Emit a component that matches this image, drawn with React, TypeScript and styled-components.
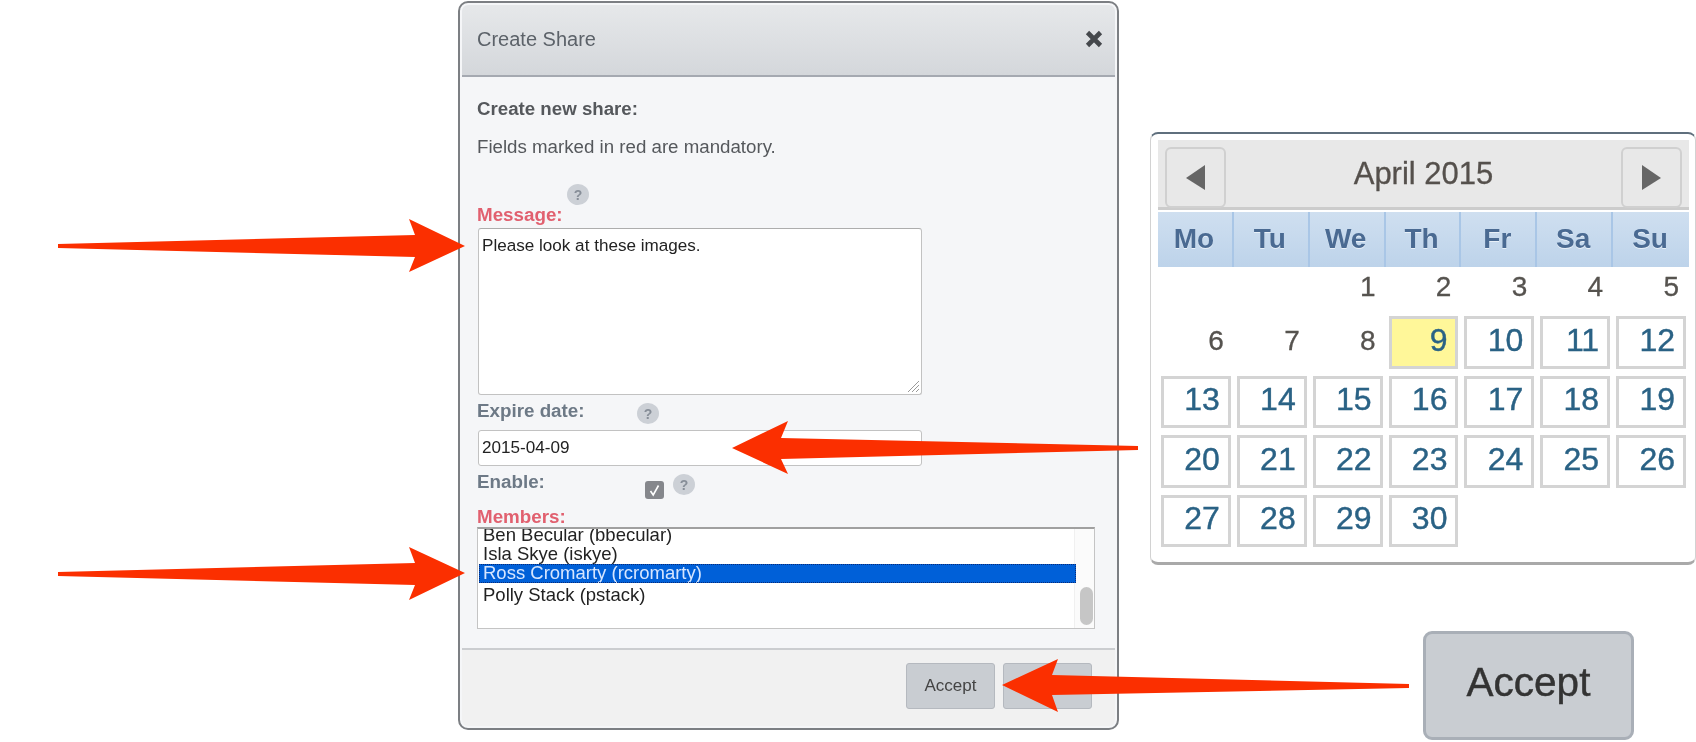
import React from 'react';
import styled, { createGlobalStyle, css } from 'styled-components';

const GlobalStyle = createGlobalStyle`
  html, body {
    margin: 0;
    padding: 0;
    width: 1696px;
    height: 742px;
    overflow: hidden;
    background: #fff;
    font-family: "Liberation Sans", Arial, sans-serif;
  }
`;

const soft = css`
  filter: blur(0.4px);
`;

const Canvas = styled.div`
  position: relative;
  display: flex;
  align-items: flex-start;
  gap: 31px;
  width: 1696px;
  height: 742px;
  padding: 1px 0 0 458px;
  box-sizing: border-box;
  overflow: hidden;
`;

const Arrows = styled.svg`
  position: absolute;
  top: 0;
  left: 0;
  pointer-events: none;
`;

/* dialog */

const Dialog = styled.section`
  ${soft}
  display: flex;
  flex-direction: column;
  flex: none;
  width: 661px;
  height: 729px;
  padding: 2px;
  box-sizing: border-box;
  background: #f5f6f8;
  border: 2px solid #7c7f83;
  border-radius: 10px;
`;

const DialogHeader = styled.header`
  display: flex;
  align-items: center;
  justify-content: space-between;
  flex: none;
  height: 72px;
  padding: 0 12px 2px 15px;
  box-sizing: border-box;
  background: linear-gradient(#e6e8ea, #d4d7db);
  border-bottom: 2px solid #a5a9b1;
  border-radius: 6px 6px 0 0;
`;

const DialogTitle = styled.h1`
  margin: 0;
  font-size: 20px;
  font-weight: 400;
  color: #5c6269;
`;

const CloseIcon = styled.svg`
  display: block;
`;

const DialogBody = styled.div`
  flex: none;
  padding: 21px 21px 19px 15px;
`;

const Heading = styled.p`
  margin: 0;
  font-size: 18.7px;
  line-height: 22px;
  font-weight: 700;
  color: #55585c;
`;

const Note = styled.p`
  margin: 16px 0 0;
  font-size: 18.7px;
  line-height: 22px;
  color: #55585c;
`;

const HelpLine = styled.div`
  margin: 26px 0 0 90px;
  height: 20px;
`;

const Help = styled.span<{ $top?: number; $left?: number }>`
  display: flex;
  align-items: center;
  justify-content: center;
  flex: none;
  width: 22px;
  height: 21px;
  margin-top: ${(p) => p.$top ?? 0}px;
  margin-left: ${(p) => p.$left ?? 0}px;
  background: #ccd0d6;
  border-radius: 50%;
  font-size: 14px;
  font-weight: 700;
  color: #878e98;
`;

const FieldLabel = styled.label<{ $required?: boolean; $width?: number }>`
  display: block;
  flex: none;
  width: ${(p) => (p.$width ? `${p.$width}px` : 'auto')};
  font-size: 18.8px;
  line-height: 22px;
  font-weight: 700;
  color: ${(p) => (p.$required ? '#e1606f' : '#6d7986')};
`;

const FieldRow = styled.div<{ $mt: number; $height: number }>`
  display: flex;
  align-items: flex-start;
  height: ${(p) => p.$height}px;
  margin-top: ${(p) => p.$mt}px;
`;

const TextBox = styled.div`
  position: relative;
  width: 444px;
  height: 167px;
  margin: 2px 0 0 1px;
  padding: 7px 3px;
  box-sizing: border-box;
  background: #fff;
  border: 1px solid #c2c2c2;
  border-top-color: #adadad;
  border-radius: 3px;
  font-size: 17.1px;
  line-height: 20px;
  color: #222;
`;

const Grip = styled.svg`
  position: absolute;
  right: 1px;
  bottom: 1px;
`;

const DateBox = styled.div`
  display: flex;
  align-items: center;
  width: 444px;
  height: 36px;
  margin: 6px 0 0 1px;
  padding: 0 3px;
  box-sizing: border-box;
  background: #fff;
  border: 1px solid #c2c2c2;
  border-radius: 3px;
  font-size: 17.1px;
  color: #222;
`;

const Checkbox = styled.span`
  display: flex;
  align-items: center;
  justify-content: center;
  flex: none;
  width: 19px;
  height: 18px;
  margin: 10px 8px 0 0;
  background: #85878c;
  border-radius: 3px;
`;

const MembersLabel = styled(FieldLabel)`
  margin-top: 8px;
  line-height: 20px;
`;

const MemberList = styled.div`
  display: flex;
  width: 618px;
  height: 102px;
  box-sizing: border-box;
  padding-left: 1px;
  background: #fff;
  border: 1px solid #c4c4c4;
  border-top: 2px solid #a0a0a0;
  overflow: hidden;
`;

const MemberRows = styled.ul`
  position: relative;
  z-index: 1;
  flex: 1;
  margin: -3px -2px 0 0;
  padding: 0;
  list-style: none;
`;

const MemberRow = styled.li<{ $selected?: boolean; $gap?: number }>`
  height: 19px;
  margin-top: ${(p) => p.$gap ?? 0}px;
  padding-left: 4px;
  box-sizing: border-box;
  font-size: 18.5px;
  line-height: 18px;
  white-space: nowrap;
  color: ${(p) => (p.$selected ? '#d6e6ff' : '#222')};
  background: ${(p) => (p.$selected ? '#0060d8' : 'transparent')};
  outline: ${(p) => (p.$selected ? '1px dotted #0a2c78' : 'none')};
  outline-offset: -1px;
`;

const ScrollTrack = styled.div`
  display: flex;
  flex-direction: column;
  justify-content: flex-end;
  align-items: center;
  flex: none;
  width: 20px;
  padding: 0 0 3px 3px;
  box-sizing: border-box;
  background: #fbfbfb;
  border-left: 1px solid #f0f0f0;
`;

const ScrollThumb = styled.div`
  width: 13px;
  height: 38px;
  background: #c6c6c6;
  border-radius: 7px;
`;

const DialogFooter = styled.footer`
  display: flex;
  justify-content: flex-end;
  gap: 8px;
  flex: 1;
  padding: 13px 23px 0 0;
  background: #f1f1f1;
  border-top: 2px solid #cbcdd0;
  border-radius: 0 0 6px 6px;
`;

const FooterButton = styled.button`
  width: 89px;
  height: 46px;
  padding: 0;
  background: #c9cdd2;
  border: 1px solid #b5b9bf;
  border-radius: 3px;
  font-family: inherit;
  font-size: 17px;
  color: #444;
`;

/* right column */

const Aside = styled.div`
  display: flex;
  flex-direction: column;
  flex: none;
`;

const Calendar = styled.section`
  ${soft}
  width: 546px;
  height: 433px;
  margin-top: 131px;
  padding: 6px 7px 0;
  box-sizing: border-box;
  background: #fff;
  border: 1px solid #d2d2d2;
  border-top: 2px solid #5f6f7d;
  border-bottom: 3px solid #a9a9a9;
  border-radius: 8px;
`;

const CalendarHeader = styled.div`
  display: flex;
  align-items: flex-start;
  justify-content: space-between;
  width: 531px;
  height: 70px;
  padding: 7px 7px 0;
  box-sizing: border-box;
  background: #e8e8e8;
  border-bottom: 3px solid #cccccc;
`;

const NavButton = styled.span`
  display: flex;
  align-items: center;
  justify-content: center;
  position: relative;
  z-index: 1;
  width: 61px;
  height: 61px;
  box-sizing: border-box;
  background: #e8e8e8;
  border: 2px solid #d0d0d0;
  border-radius: 6px;
`;

const MonthTitle = styled.div`
  margin-top: 8px;
  font-size: 31px;
  line-height: 38px;
  color: #55504c;
  -webkit-text-stroke: 0.3px #55504c;
`;

const WeekHead = styled.div`
  display: grid;
  grid-template-columns: repeat(7, 1fr);
  width: 531px;
  height: 55px;
  margin-top: 2px;
`;

const WeekDay = styled.div`
  display: flex;
  align-items: center;
  justify-content: center;
  padding: 0 2px 1px 0;
  box-sizing: border-box;
  background: linear-gradient(#cfdff0, #bdd3ea);
  border-right: 2px solid #a9c6e6;
  font-size: 28px;
  font-weight: 700;
  color: #4a6a92;
  text-shadow: 0 1px 0 #e8f0f8;

  &:last-child {
    border-right: 0;
  }
`;

const DayGrid = styled.div`
  display: grid;
  grid-template-columns: repeat(7, 1fr);
  grid-template-rows: 49px repeat(4, 59.5px);
  width: 531px;
`;

const Day = styled.div<{ $kind: 'plain' | 'link' | 'today' | 'empty' }>`
  display: flex;
  align-items: center;
  justify-content: flex-end;
  margin: 0 3px 7px;
  box-sizing: border-box;
  ${(p) =>
    p.$kind === 'link' || p.$kind === 'today'
      ? css`
          padding: 0 8px 4px 0;
          background: ${p.$kind === 'today' ? '#fff799' : '#fff'};
          border: 3px solid #d4d4d4;
          font-size: 32px;
          color: #2a6285;
          -webkit-text-stroke: 0.4px #2a6285;
        `
      : css`
          padding: 0 7px 2px 0;
          font-size: 28px;
          color: #56534f;
          -webkit-text-stroke: 0.3px #56534f;
        `}
`;

const BigAccept = styled.button`
  ${soft}
  width: 211px;
  height: 109px;
  margin: 66px 0 0 273px;
  padding: 0 0 6px;
  background: #c9cdd2;
  border: 3px solid #a9afb7;
  border-radius: 9px;
  font-family: inherit;
  font-size: 40.5px;
  color: #333;
  -webkit-text-stroke: 0.4px #333;
`;

const dayNames = ['Mo', 'Tu', 'We', 'Th', 'Fr', 'Sa', 'Su'];
const days = [0, 0, ...Array.from({ length: 30 }, (_, i) => i + 1)];

const kindOf = (n: number) => {
  if (n === 0) return 'empty';
  if (n === 9) return 'today';
  return n < 9 ? 'plain' : 'link';
};

const arrowPaths = [
  '58,244 415,235 409,219 465,246 409,272 415,257 58,248',
  '58,572 415,563 409,547 465,573 409,600 415,585 58,576',
  '1138,446 781,438 788,421 732,448 788,474 781,459 1138,450',
  '1409,684 1052,675 1058,659 1002,685 1058,712 1052,695 1409,688',
];

export default function App() {
  return (
    <>
      <GlobalStyle />
      <Canvas>
        <Dialog>
          <DialogHeader>
            <DialogTitle>Create Share</DialogTitle>
            <CloseIcon width="18" height="18" viewBox="0 0 18 18">
              <path d="M2.5 2.5 15.5 15.5M15.5 2.5 2.5 15.5" stroke="#45484c" strokeWidth="4.6" />
            </CloseIcon>
          </DialogHeader>
          <DialogBody>
            <Heading>Create new share:</Heading>
            <Note>Fields marked in red are mandatory.</Note>
            <HelpLine>
              <Help>?</Help>
            </HelpLine>
            <FieldLabel $required>Message:</FieldLabel>
            <TextBox>
              Please look at these images.
              <Grip width="14" height="14" viewBox="0 0 14 14">
                <path d="M13 2 2 13M13 6 6 13M13 10 10 13" stroke="#9a9a9a" strokeWidth="1" />
              </Grip>
            </TextBox>
            <FieldRow $mt={5} $height={24}>
              <FieldLabel $width={160}>Expire date:</FieldLabel>
              <Help $top={3}>?</Help>
            </FieldRow>
            <DateBox>2015-04-09</DateBox>
            <FieldRow $mt={5} $height={28}>
              <FieldLabel $width={168}>Enable:</FieldLabel>
              <Checkbox>
                <svg width="13" height="13" viewBox="0 0 13 13">
                  <path d="M2.5 7 5.2 11 10.5 1.5" fill="none" stroke="#fff" strokeWidth="1.6" />
                </svg>
              </Checkbox>
              <Help $top={3} $left={1}>?</Help>
            </FieldRow>
            <MembersLabel $required>Members:</MembersLabel>
            <MemberList>
              <MemberRows>
                <MemberRow>Ben Becular (bbecular)</MemberRow>
                <MemberRow>Isla Skye (iskye)</MemberRow>
                <MemberRow $selected>Ross Cromarty (rcromarty)</MemberRow>
                <MemberRow $gap={3}>Polly Stack (pstack)</MemberRow>
              </MemberRows>
              <ScrollTrack>
                <ScrollThumb />
              </ScrollTrack>
            </MemberList>
          </DialogBody>
          <DialogFooter>
            <FooterButton>Accept</FooterButton>
            <FooterButton />
          </DialogFooter>
        </Dialog>
        <Aside>
          <Calendar>
            <CalendarHeader>
              <NavButton>
                <svg width="19" height="25" viewBox="0 0 19 25">
                  <polygon points="19,0 19,25 0,13" fill="#666" />
                </svg>
              </NavButton>
              <MonthTitle>April 2015</MonthTitle>
              <NavButton>
                <svg width="19" height="25" viewBox="0 0 19 25">
                  <polygon points="0,0 0,25 19,13" fill="#666" />
                </svg>
              </NavButton>
            </CalendarHeader>
            <WeekHead>
              {dayNames.map((d) => (
                <WeekDay key={d}>{d}</WeekDay>
              ))}
            </WeekHead>
            <DayGrid>
              {days.map((n, i) => (
                <Day key={i} $kind={kindOf(n)}>
                  {n > 0 ? n : ''}
                </Day>
              ))}
            </DayGrid>
          </Calendar>
          <BigAccept>Accept</BigAccept>
        </Aside>
        <Arrows width="1696" height="742" viewBox="0 0 1696 742">
          {arrowPaths.map((points) => (
            <polygon key={points} points={points} fill="#fb2f00" />
          ))}
        </Arrows>
      </Canvas>
    </>
  );
}
